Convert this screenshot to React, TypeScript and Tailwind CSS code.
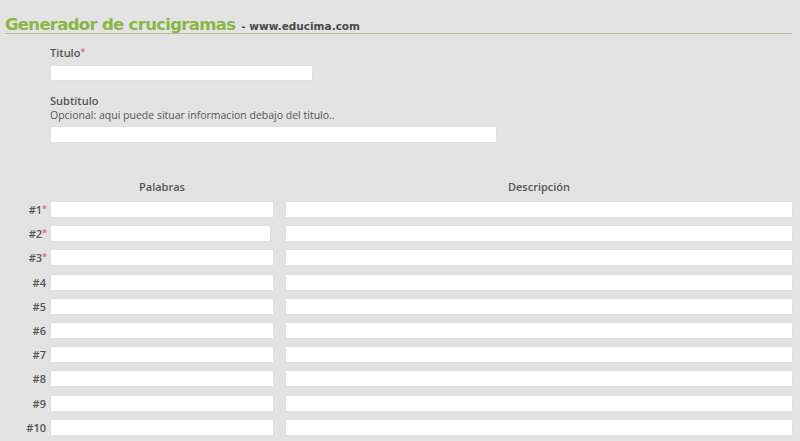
import React from "react";

const rows = [1, 2, 3, 4, 5, 6, 7, 8, 9, 10];

export default function App() {
  return (
    <div className="w-[800px] h-[441px] overflow-hidden bg-[#e3e3e3] text-[#555]" style={{ fontFamily: '"Open Sans", sans-serif' }}>
      <div className="pl-[5px] pr-[8px]">
        <div className="pt-[18px] pb-[0px] border-b border-[#b2bd90] leading-[14px] whitespace-nowrap" style={{ fontFamily: '"DejaVu Sans", Verdana, sans-serif' }}>
          <span className="text-[16.5px] font-bold text-[#8cb545] tracking-[-0.7px]">Generador de crucigramas</span>
          <span className="text-[10.5px] font-bold text-[#4a4a4a] ml-[6px]">- www.educima.com</span>
        </div>
      </div>
      <div className="pl-[50px] pt-[11px]">
        <div className="text-[11px] font-semibold leading-[15px]">
          Titulo<span className="text-[#e0607a] text-[9px] relative top-[-2px]">*</span>
        </div>
        <div className="ml-[1px] mt-[5px] w-[261px] h-[14px] bg-white shadow-[0_0_1px_#ccc]" />
        <div className="text-[11px] font-semibold leading-[14px] mt-[14px]">Subtitulo</div>
        <div className="text-[10.5px] leading-[15px] text-[#555]">Opcional: aqui puede situar informacion debajo del titulo..</div>
        <div className="ml-[1px] mt-[4px] w-[445px] h-[15px] bg-white shadow-[0_0_1px_#ccc]" />
      </div>
      <div className="flex mt-[37px] text-[11px] font-semibold leading-[15px]">
        <div className="w-[51px]" />
        <div className="w-[222px] text-center">Palabras</div>
        <div className="w-[13px]" />
        <div className="w-[506px] text-center">Descripción</div>
      </div>
      <div className="flex flex-col gap-[9.2px] mt-[8px]">
        {rows.map((n) => (
          <div key={n} className="flex items-center h-[15px]">
            <div className="w-[48px] pr-[1px] text-right text-[11px] font-semibold leading-[15px] whitespace-nowrap">
              #{n}
              {n <= 3 ? (
                <span className="text-[#e0607a] text-[9px] relative top-[-2px]">*</span>
              ) : (
                <span className="inline-block w-[1px]" />
              )}
            </div>
            <div className="ml-[3px] w-[222px]">
              <div className={`h-[15px] bg-white shadow-[0_0_1px_#ccc] ${n === 2 ? "w-[219px]" : "w-[222px]"}`} />
            </div>
            <div className="ml-[13px] w-[506px] h-[15px] bg-white shadow-[0_0_1px_#ccc]" />
          </div>
        ))}
      </div>
    </div>
  );
}
